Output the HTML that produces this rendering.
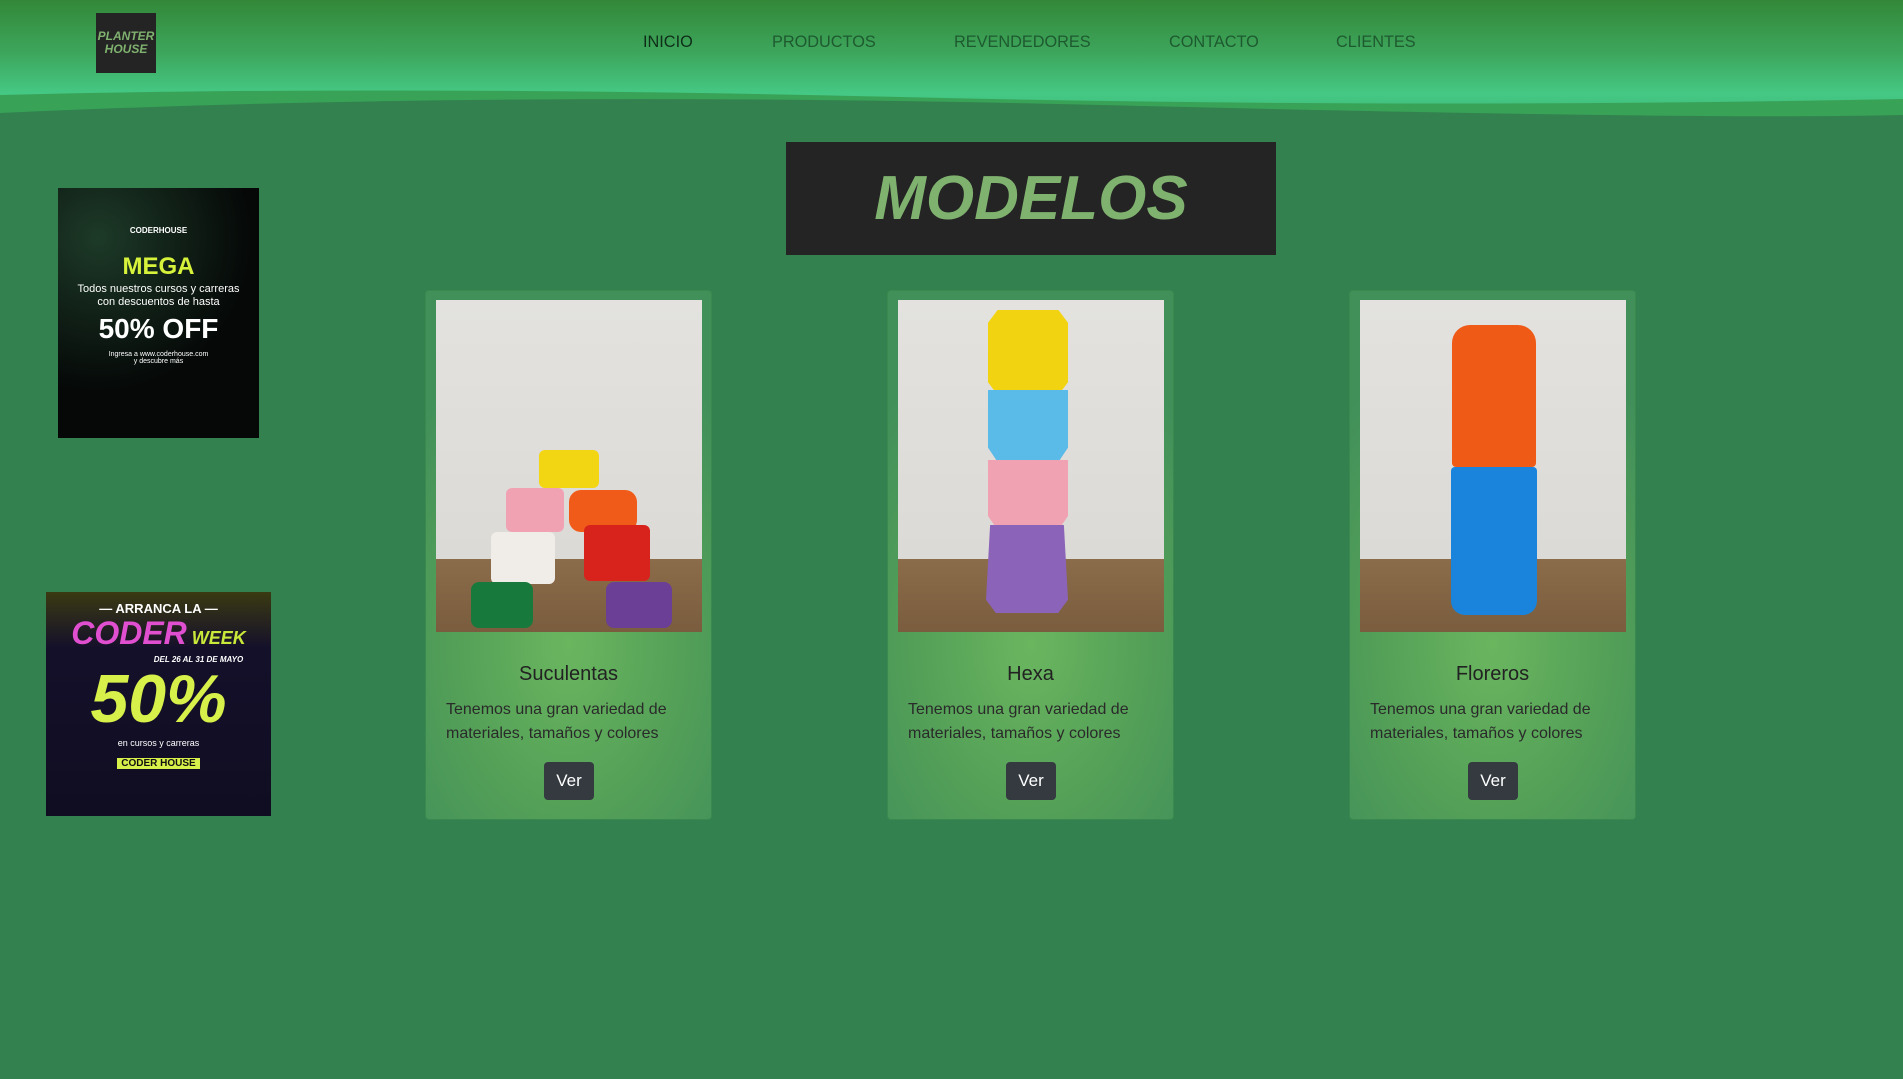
<!DOCTYPE html>
<html><head><meta charset="utf-8"><style>
*{margin:0;padding:0;box-sizing:border-box}
body{width:1903px;height:1079px;overflow:hidden;background:#32814f;font-family:"Liberation Sans",sans-serif;position:relative}
.hdr{position:absolute;left:0;top:0;width:1903px;height:118px;background:linear-gradient(180deg,#338838 0%,#3da65c 45%,#45c985 80%,#3fb574 100%)}
.wave{position:absolute;left:0;top:85px;width:1903px;height:40px}
.logo{position:absolute;left:96px;top:13px;width:60px;height:60px;background:#242424;color:#7fb26f;font-weight:bold;font-style:italic;font-size:12px;line-height:13px;text-align:center;padding-top:17px}
.nav{position:absolute;top:33px;font-size:16.3px;color:#1e5a30}
.title{position:absolute;left:786px;top:142px;width:490px;height:113px;background:#242424;color:#7fb26f;font-weight:bold;font-style:italic;font-size:62px;text-align:center;line-height:113px;letter-spacing:0px}
.card{position:absolute;top:290px;width:287px;height:530px;border:1px solid #3a8a50;border-radius:4px;background:radial-gradient(ellipse 75% 60% at 50% 67%,#6ab65f 0%,#55a158 50%,#41905a 100%)}
.img{position:absolute;left:10px;top:9px;width:266px;height:332px;background:linear-gradient(180deg,#e3e2df 0%,#dcdad6 78%,#8b6c4a 78%,#7a5d3e 100%);overflow:hidden}
.img div{position:absolute}
.ct{position:absolute;top:372px;width:100%;text-align:center;font-size:20px;color:#222}
.cd{position:absolute;left:20px;top:407px;font-size:16px;line-height:24px;color:#2a2a2a}
.btn{position:absolute;left:118px;top:471px;width:50px;height:38px;background:#343a40;border-radius:4px;color:#fff;font-size:17px;text-align:center;line-height:38px}
.ad{position:absolute;overflow:hidden;color:#fff;text-align:center}
</style></head><body>
<div class="hdr"></div>
<svg class="wave" viewBox="0 0 1903 40" preserveAspectRatio="none"><path d="M0 10 Q400 0 900 12 T1903 14 V40 H0Z" fill="#38a257"/><path d="M0 28 Q500 5 1100 20 T1903 30 V40 H0Z" fill="#32814f"/></svg>
<div class="logo">PLANTER<br>HOUSE</div>
<div class="nav" style="left:643px;color:#0f2e1a">INICIO</div>
<div class="nav" style="left:772px">PRODUCTOS</div>
<div class="nav" style="left:954px">REVENDEDORES</div>
<div class="nav" style="left:1169px">CONTACTO</div>
<div class="nav" style="left:1336px">CLIENTES</div>
<div class="title">MODELOS</div>

<div class="ad" style="left:58px;top:188px;width:201px;height:250px;background:radial-gradient(circle at 20% 20%,#1d3a28,#050807 60%)">
<div style="font-size:8px;font-weight:bold;margin-top:38px">CODERHOUSE</div>
<div style="margin-top:18px;font-size:24px;font-weight:bold;color:#d7f23a">MEGA</div>
<div style="font-size:11px;margin-top:2px;line-height:13px">Todos nuestros cursos y carreras<br>con descuentos de hasta</div>
<div style="font-size:28px;font-weight:bold;margin-top:4px">50% OFF</div>
<div style="font-size:7px;margin-top:6px">Ingresa a www.coderhouse.com<br>y descubre más</div></div>

<div class="ad" style="left:46px;top:592px;width:225px;height:224px;background:linear-gradient(180deg,#3a3a12,#15102a 25%,#100d22)">
<div style="font-size:13px;font-weight:bold;margin-top:9px">— ARRANCA LA —</div>
<div style="font-size:32px;font-weight:bold;font-style:italic;color:#e04fd0;line-height:34px">CODER<span style="font-size:18px;color:#c8e83a"> WEEK</span></div>
<div style="font-size:8px;font-style:italic;font-weight:bold;margin-left:80px">DEL 26 AL 31 DE MAYO</div>
<div style="font-size:68px;font-weight:bold;font-style:italic;color:#d8f04a;line-height:70px">50%</div>
<div style="font-size:9px;margin-top:4px">en cursos y carreras</div>
<div style="font-size:10px;color:#111;background:#d8f04a;display:inline-block;margin-top:10px;padding:0 4px;font-weight:bold">CODER HOUSE</div></div>

<div class="card" style="left:425px">
<div class="img">
<div style="left:103px;top:150px;width:60px;height:38px;background:#f2d513;border-radius:6px"></div>
<div style="left:70px;top:188px;width:58px;height:44px;background:#f0a2b3;border-radius:6px"></div>
<div style="left:133px;top:190px;width:68px;height:42px;background:#f05b1a;border-radius:12px"></div>
<div style="left:55px;top:232px;width:64px;height:52px;background:#f0ece8;border-radius:6px"></div>
<div style="left:148px;top:225px;width:66px;height:56px;background:#d8231c;border-radius:6px"></div>
<div style="left:35px;top:282px;width:62px;height:46px;background:#177a3c;border-radius:8px"></div>
<div style="left:170px;top:282px;width:66px;height:46px;background:#6b3f96;border-radius:8px"></div>
</div>
<div class="ct">Suculentas</div><div class="cd">Tenemos una gran variedad de<br>materiales, tamaños y colores</div><div class="btn">Ver</div></div>

<div class="card" style="left:887px">
<div class="img">
<div style="left:90px;top:10px;width:80px;height:85px;background:#f2d311;clip-path:polygon(12% 0,88% 0,100% 15%,100% 85%,88% 100%,12% 100%,0 85%,0 15%)"></div>
<div style="left:90px;top:90px;width:80px;height:72px;background:#5bbbe8;clip-path:polygon(0 0,100% 0,100% 80%,88% 100%,12% 100%,0 80%)"></div>
<div style="left:90px;top:160px;width:80px;height:70px;background:#f0a2b2;clip-path:polygon(0 0,100% 0,100% 80%,88% 100%,12% 100%,0 80%)"></div>
<div style="left:88px;top:225px;width:82px;height:88px;background:#8b63b8;clip-path:polygon(5% 0,95% 0,100% 85%,88% 100%,12% 100%,0 85%)"></div>
</div>
<div class="ct">Hexa</div><div class="cd">Tenemos una gran variedad de<br>materiales, tamaños y colores</div><div class="btn">Ver</div></div>

<div class="card" style="left:1349px">
<div class="img">
<div style="left:92px;top:25px;width:84px;height:142px;background:#ef5a17;border-radius:18px 18px 4px 4px"></div>
<div style="left:91px;top:167px;width:86px;height:148px;background:#1a84dc;border-radius:4px 4px 14px 14px"></div>
</div>
<div class="ct">Floreros</div><div class="cd">Tenemos una gran variedad de<br>materiales, tamaños y colores</div><div class="btn">Ver</div></div>
</body></html>
